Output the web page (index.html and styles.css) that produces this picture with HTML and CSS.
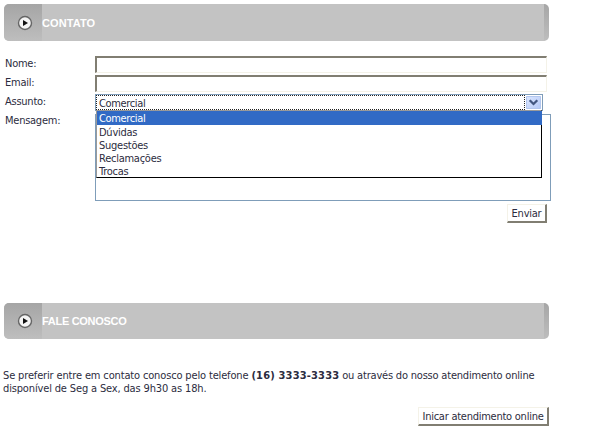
FILE: index.html
```
<!DOCTYPE html>
<html lang="pt-BR">
<head>
<meta charset="utf-8">
<title>Contato</title>
<link rel="stylesheet" href="styles.css">
</head>
<body>
<main class="page">
  <h2 class="heading">
    <span class="heading-icon"><svg width="16" height="16" viewBox="0 0 16 16"><circle cx="8" cy="8" r="6.5" fill="#f4f4f4" stroke="#666" stroke-width="1.4"/><path d="M6 5 11 8 6 11z" fill="#111"/></svg></span>
    <span class="heading-text">CONTATO</span>
  </h2>
  <form class="form">
    <label class="label" for="nome">Nome:</label>
    <input class="input" id="nome" type="text">
    <label class="label" for="email">Email:</label>
    <input class="input" id="email" type="text">
    <span class="label">Assunto:</span>
    <div class="select">
      <div class="select-value">Comercial</div>
      <span class="arrow"><svg width="15" height="13" viewBox="0 0 15 13"><path d="M3.7 4.3 7.5 8 11.3 4.3" fill="none" stroke="#435780" stroke-width="2.3"/></svg></span>
      <ul class="options">
        <li class="option selected">Comercial</li>
        <li class="option">Dúvidas</li>
        <li class="option">Sugestões</li>
        <li class="option">Reclamações</li>
        <li class="option">Trocas</li>
      </ul>
    </div>
    <label class="label message-label" for="mensagem">Mensagem:</label>
    <textarea class="message" id="mensagem"></textarea>
    <button class="button send" type="button">Enviar</button>
  </form>
  <h2 class="heading heading-talk">
    <span class="heading-icon"><svg width="16" height="16" viewBox="0 0 16 16"><circle cx="8" cy="8" r="6.5" fill="#f4f4f4" stroke="#666" stroke-width="1.4"/><path d="M6 5 11 8 6 11z" fill="#111"/></svg></span>
    <span class="heading-text talk-title">FALE CONOSCO</span>
  </h2>
  <p class="text">Se preferir entre em contato conosco pelo telefone <b class="phone">(16) 3333-3333</b> <span class="tail">ou através do nosso atendimento online</span><br>disponível de Seg a Sex, das 9h30 as 18h.</p>
  <button class="button chat" type="button">Inicar atendimento online</button>
</main>
</body>
</html>
```
FILE: styles.css
```
* { box-sizing: border-box; }
body {
  margin: 0;
  background: #fff;
  color: #2c2c40;
  font: 11px/13px "DejaVu Sans Condensed", "DejaVu Sans", sans-serif;
  font-stretch: condensed;
  letter-spacing: -0.25px;
  white-space: nowrap;
}
.page { width: 549px; padding: 4px 0 0 4px; display: flex; flex-direction: column; }
.heading {
  display: flex;
  align-items: center;
  width: 545px;
  height: 37px;
  margin: 0;
  border-radius: 5px;
  overflow: hidden;
  background: linear-gradient(#a6a6a6, #bdbdbd) right / 5px 100% no-repeat #c3c3c3;
}
.heading-icon {
  display: flex;
  align-items: center;
  width: 38px;
  height: 100%;
  padding-left: 13px;
  background: linear-gradient(#a5a5a5, #bebebe);
}
.heading-text { color: #fff; font: bold 11px/14px "Liberation Sans", sans-serif; letter-spacing: .1px; }
.talk-title { letter-spacing: -.3px; }
.form {
  display: grid;
  grid-template-columns: 90px 456px;
  grid-template-rows: 19px 19px 20px 87px 22px;
  margin: 15px 0 0 1px;
}
.label { padding-top: 1px; }
.input {
  width: 452px;
  height: 17px;
  margin: 0;
  padding: 0;
  border: 1px solid #f4f2e8;
  border-top: 2px solid #817e72;
  border-left: 2px solid #817e72;
  background: #fff;
}
.select {
  position: relative;
  display: flex;
  width: 448px;
  height: 17px;
  border: 1px solid #7f9db9;
  background: #fff;
  letter-spacing: -.35px;
}
.select-value { flex: 1; border: 1px dotted #222; padding-left: 2px; line-height: 15px; }
.arrow {
  display: block;
  width: 15px;
  height: 13px;
  margin: 1px;
  border-radius: 1px;
  background: linear-gradient(135deg, #dde8ff, #b4c8f6);
  box-shadow: inset 0 0 0 1px #b3c7ef;
}
.arrow svg { display: block; }
.options {
  position: absolute;
  top: 15px;
  left: 0;
  z-index: 1;
  width: 446px;
  height: 68px;
  margin: 0;
  padding: 0;
  list-style: none;
  border: 1px solid #000;
  border-top-color: #9a9a9a;
  border-left-color: #9a9a9a;
  background: #fff;
  letter-spacing: -.25px;
}
.option { height: 13px; padding-left: 2px; line-height: 15px; }
.selected { height: 14px; margin-right: -1px; background: #316ac5; color: #fff; letter-spacing: -.35px; }
.message-label { padding-top: 0; }
.message { width: 456px; height: 87px; margin: 0; border: 1px solid #7f9db9; resize: none; background: #fff; }
.button {
  height: 19px;
  padding: 0;
  border: 1px solid #f4f2e8;
  border-right: 2px solid #817e72;
  border-bottom: 2px solid #817e72;
  background: #fff;
  color: inherit;
  font: inherit;
  letter-spacing: inherit;
}
.send { grid-column: 2; width: 40px; margin: 3px 0 0 412px; }
.heading-talk { height: 36px; margin-top: 80px; }
.text { margin: 30px 0 0 -1px; letter-spacing: -.15px; }
.phone { letter-spacing: .17px; }
.tail { letter-spacing: -.2px; }
.chat { align-self: flex-end; width: 131px; margin-top: 12px; }
```
